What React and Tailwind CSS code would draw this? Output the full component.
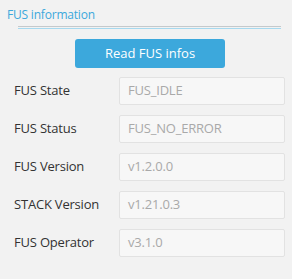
import React from "react";

const rows = [
  ["FUS State", "FUS_IDLE"],
  ["FUS Status", "FUS_NO_ERROR"],
  ["FUS Version", "v1.2.0.0"],
  ["STACK Version", "v1.21.0.3"],
  ["FUS Operator", "v3.1.0"],
];

export default function App() {
  return (
    <div
      className="w-[292px] h-[279px] bg-[#f2f2f2] overflow-hidden"
      style={{ fontFamily: '"Open Sans", sans-serif' }}
    >
      {/* header */}
      <div className="pl-[7px] pt-[7px] text-[12px] leading-[16px] tracking-[-0.2px] text-[#3ca8dc]">FUS information</div>
      <div className="ml-[18px] mr-[11px] mt-[3px] border-t border-[#c4c9cc]" />
      <div className="ml-[18px] mr-[11px] mt-[1px] border-t border-[#a6d9ef]" />

      <div className="flex justify-center mt-[10px]">
        <button className="w-[150px] h-[29px] ml-[8px] rounded-[3px] bg-[#3ca8dc] text-white text-[13px]">
          Read FUS infos
        </button>
      </div>

      <div className="mt-[9px] flex flex-col gap-[10px]">
        {rows.map(([label, val]) => (
          <div key={label} className="flex items-center h-[28px]">
            <div className="w-[119px] pl-[14px] text-[13px] tracking-[-0.2px] text-[#333333]">{label}</div>
            <div className="w-[166px] h-[28px] flex items-center pl-[8px] bg-[#f7f7f7] border border-[#e2e2e2] rounded-[2px] text-[13px] tracking-[-0.2px] text-[#a9a9a9]">
              {val}
            </div>
          </div>
        ))}
      </div>
    </div>
  );
}
